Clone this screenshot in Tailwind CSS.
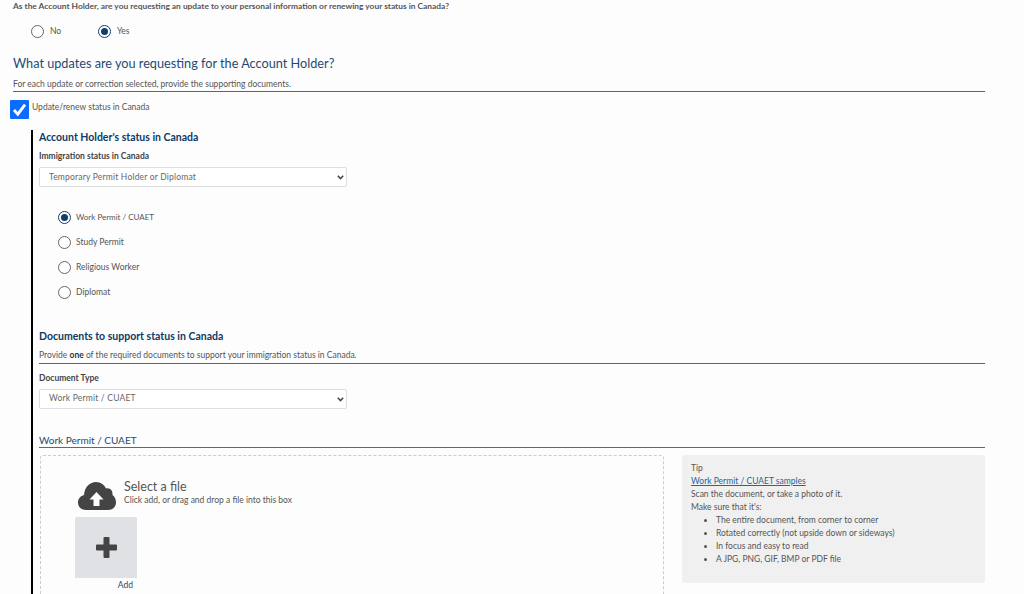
<!DOCTYPE html>
<html lang="en">
<head>
  <meta charset="UTF-8">
  <title>Account Holder updates</title>
  <script src="https://cdn.jsdelivr.net/npm/@tailwindcss/browser@4"></script>
</head>
<body class="bg-[#fdfdfd] h-[594px] overflow-hidden font-['Lato','Open_Sans',sans-serif] text-[8.5px] leading-[13px] text-[#555]">

  <!-- Top question -->
  <div class="pl-[13px] w-[985px]">
    <p class="h-[14px] text-[8.4px] font-bold text-[#555]">As the Account Holder, are you requesting an update to your personal information or renewing your status in Canada?</p>

    <div class="flex items-center h-[14px] mt-[10px] pl-[18px]">
      <span class="w-[13px] h-[13px] rounded-full border-[1.500px] border-[#666] bg-white shrink-0"></span>
      <span class="ml-[6px] w-[48px]">No</span>
      <span class="w-[13px] h-[13px] rounded-full border-[1.500px] border-[#0f3e6e] bg-white shrink-0 flex items-center justify-center"><span class="w-[7px] h-[7px] rounded-full bg-[#0f3e6e]"></span></span>
      <span class="ml-[6px]">Yes</span>
    </div>

    <h2 class="text-[12.7px] leading-[18px] mt-[16px] text-[#1d4a73]">What updates are you requesting for the Account Holder?</h2>
    <p class="mt-[6px] h-[13px]">For each update or correction selected, provide the supporting documents.</p>
    <div class="h-px bg-[#666]"></div>
  </div>

  <!-- Checkbox row -->
  <div class="flex pl-[10px] mt-[8px] h-[19px]">
    <span class="w-[19px] h-[19px] bg-[#0b6cff] rounded-[1px] flex items-center justify-center shrink-0">
      <svg width="15" height="15" viewBox="0 0 15 15"><path d="M2 8 L5.800 12.200 L13 2.600" fill="none" stroke="#fff" stroke-width="2.800"/></svg>
    </span>
    <span class="ml-[3px] mt-px">Update/renew status in Canada</span>
  </div>

  <!-- Indented section with black rule -->
  <div class="ml-[31px] mt-[12px] w-[954px] border-l-[2px] border-black pl-[6px] h-[470px]">
    <h3 class="text-[10.5px] leading-[14px] font-bold text-[#0e3a66] mt-[-1px]">Account Holder's status in Canada</h3>
    <label class="block mt-[6px] h-[13px] font-bold text-[#444]">Immigration status in Canada</label>
    <div class="relative mt-[4px] w-[308px] h-[20px]">
      <select class="block appearance-none w-full h-full pl-[9px] bg-white border border-[#ddd] rounded-[2px] text-[8.5px] tracking-[0.2px] text-[#666]">
        <option>Temporary Permit Holder or Diplomat</option>
      </select>
      <svg width="7" height="5" viewBox="0 0 7 5" class="absolute right-[3px] top-[8px]"><path d="M0.800 0.800 L3.500 3.600 L6.200 0.800" fill="none" stroke="#444" stroke-width="1.500"/></svg>
    </div>

    <!-- Status radios -->
    <div class="mt-[23.500px] pl-[19px] flex flex-col gap-[12.300px]">
      <div class="flex items-center h-[13px]">
        <span class="w-[13px] h-[13px] rounded-full border-[1.500px] border-[#0f3e6e] bg-white flex items-center justify-center"><span class="w-[7px] h-[7px] rounded-full bg-[#0f3e6e]"></span></span>
        <span class="ml-[5px] text-[8px]">Work Permit / CUAET</span>
      </div>
      <div class="flex items-center h-[13px]">
        <span class="w-[13px] h-[13px] rounded-full border-[1.500px] border-[#666] bg-white"></span>
        <span class="ml-[5px]">Study Permit</span>
      </div>
      <div class="flex items-center h-[13px]">
        <span class="w-[13px] h-[13px] rounded-full border-[1.500px] border-[#666] bg-white"></span>
        <span class="ml-[5px]">Religious Worker</span>
      </div>
      <div class="flex items-center h-[13px]">
        <span class="w-[13px] h-[13px] rounded-full border-[1.500px] border-[#666] bg-white"></span>
        <span class="ml-[5px]">Diplomat</span>
      </div>
    </div>

    <!-- Documents -->
    <h3 class="mt-[29.500px] text-[10.5px] leading-[14px] font-bold text-[#0e3a66]">Documents to support status in Canada</h3>
    <p class="mt-[6px] h-[13px]">Provide <b class="font-bold text-[#333]">one</b> of the required documents to support your immigration status in Canada.</p>
    <div class="h-px bg-[#666] mt-px"></div>
    <label class="block mt-[8px] h-[13px] font-bold text-[#444]">Document Type</label>
    <div class="relative mt-[4px] w-[308px] h-[20px]">
      <select class="block appearance-none w-full h-full pl-[9px] bg-white border border-[#ddd] rounded-[2px] text-[8.5px] tracking-[0.2px] text-[#666]">
        <option>Work Permit / CUAET</option>
      </select>
      <svg width="7" height="5" viewBox="0 0 7 5" class="absolute right-[3px] top-[8px]"><path d="M0.800 0.800 L3.500 3.600 L6.200 0.800" fill="none" stroke="#444" stroke-width="1.500"/></svg>
    </div>

    <h3 class="mt-[24px] text-[10px] leading-[14px] text-[#1d4a73]">Work Permit / CUAET</h3>
    <div class="h-px bg-[#666]"></div>

    <!-- Upload and tip -->
    <div class="flex mt-[7px]">
      <div class="w-[624px] h-[160px] ml-px border border-dashed border-[#ccc] rounded-[3px] pl-[34px] pt-[26px] shrink-0">
        <div class="flex">
          <svg width="38" height="29" viewBox="0 0 38 29" class="ml-[3px] shrink-0">
            <path d="M8 28 C3 28 0 24.500 0 20.500 C0 16.500 2.500 14 6 13 C6.500 5 12 0 18 0 C23 0 26.500 3 28 6.500 C32 5.500 35 8.500 34.500 13 C36.500 14.500 38 17 38 20.500 C38 24.500 35 28 30 28 Z" fill="#444"/>
            <path d="M18.500 10 L25.500 17.500 L21.500 17.500 L21.500 24 L15.500 24 L15.500 17.500 L11.500 17.500 Z" fill="#fdfdfd"/>
          </svg>
          <div class="ml-[8px]">
            <p class="text-[12.5px] leading-[14px] mt-[-2px] text-[#555]">Select a file</p>
            <p>Click add, or drag and drop a file into this box</p>
          </div>
        </div>
        <div class="w-[62px] h-[61px] bg-[#dfe1e5] rounded-t-[2px] mt-[6px] flex items-center justify-center">
          <svg width="21" height="21" viewBox="0 0 21 21"><path d="M8.500 0 H12.500 Q13.500 0 13.500 1 V7.500 H20 Q21 7.500 21 8.500 V12.500 Q21 13.500 20 13.500 H13.500 V20 Q13.500 21 12.500 21 H8.500 Q7.500 21 7.500 20 V13.500 H1 Q0 13.500 0 12.500 V8.500 Q0 7.500 1 7.500 H7.500 V1 Q7.500 0 8.500 0 Z" fill="#444"/></svg>
        </div>
        <p class="w-[62px] mt-[1.500px] text-right text-[#1d4a73] pr-[4px]">Add</p>
      </div>

      <div class="ml-[18px] w-[303px] h-[128px] bg-[#f0f0f0] rounded-[3px] pl-[9px] pt-[7px]">
        <p>Tip</p>
        <a class="block underline text-[#2a6496]">Work Permit / CUAET samples</a>
        <p>Scan the document, or take a photo of it.</p>
        <p>Make sure that it's:</p>
        <ul class="list-disc pl-[25px]">
          <li>The entire document, from corner to corner</li>
          <li>Rotated correctly (not upside down or sideways)</li>
          <li>In focus and easy to read</li>
          <li>A JPG, PNG, GIF, BMP or PDF file</li>
        </ul>
      </div>
    </div>
  </div>

</body>
</html>
